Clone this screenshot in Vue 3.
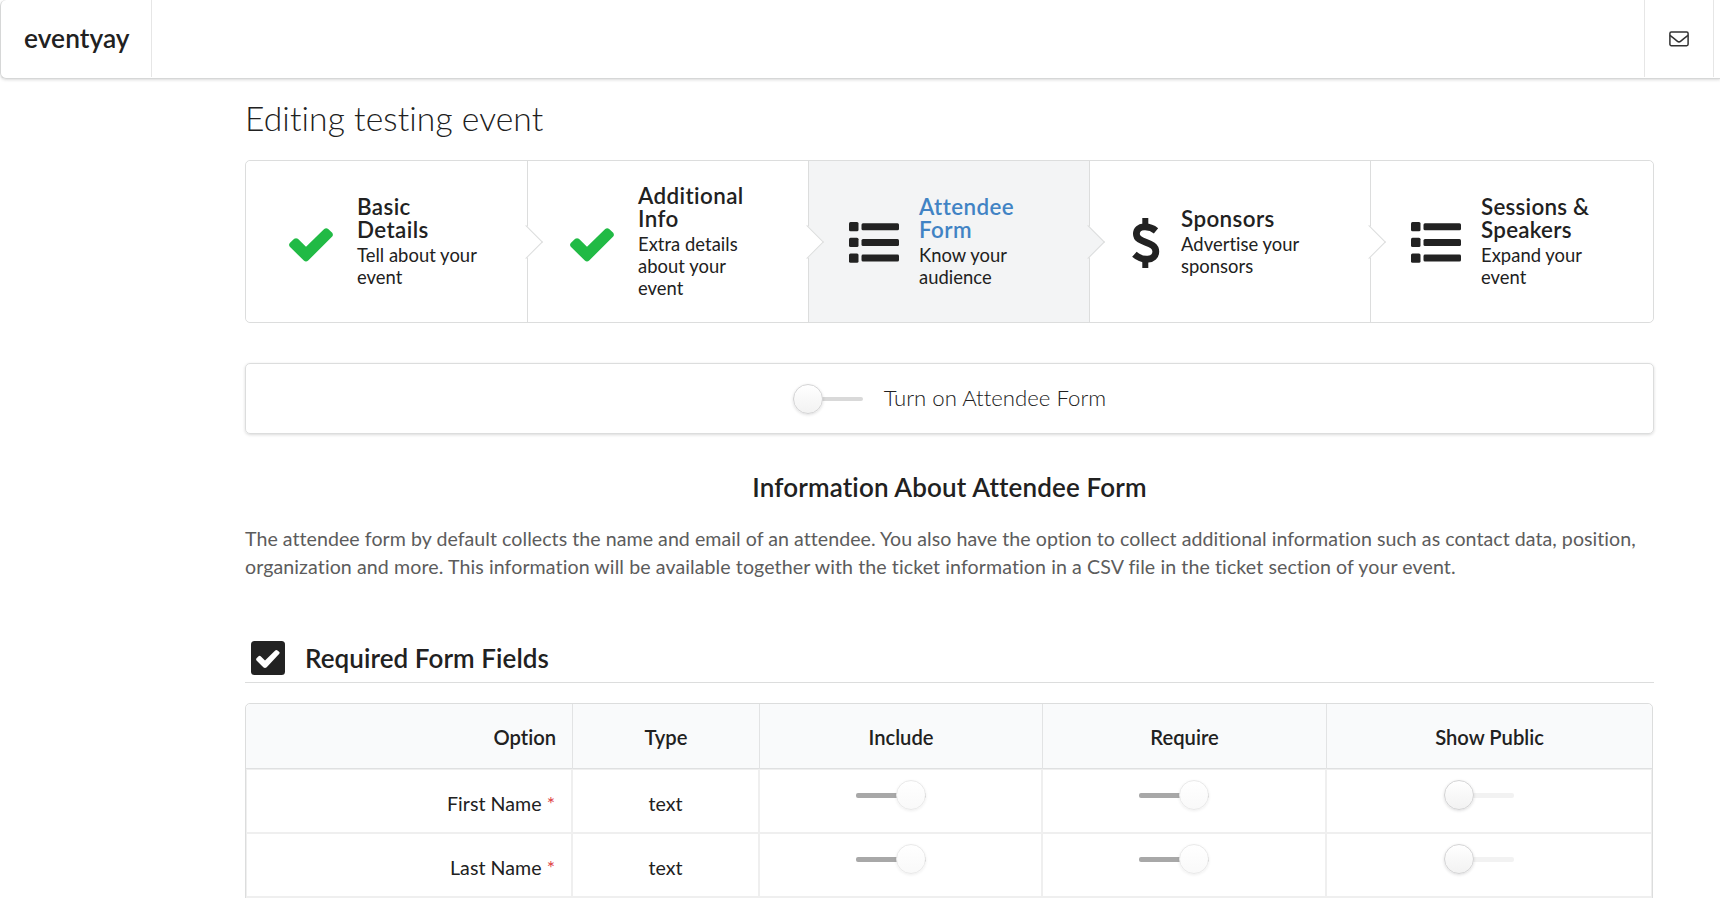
<script setup>
const steps = [
  { key: 'basic', icon: 'check', title: 'Basic\nDetails', text: 'Tell about your\nevent' },
  { key: 'additional', icon: 'check', title: 'Additional\nInfo', text: 'Extra details\nabout your\nevent' },
  { key: 'attendee', icon: 'list', title: 'Attendee\nForm', text: 'Know your\naudience', active: true },
  { key: 'sponsors', icon: 'dollar', title: 'Sponsors', text: 'Advertise your\nsponsors' },
  { key: 'sessions', icon: 'list', title: 'Sessions &\nSpeakers', text: 'Expand your\nevent' },
]
const columns = ['Option', 'Type', 'Include', 'Require', 'Show Public']
const rows = ['First Name', 'Last Name']
</script>

<template>
  <div class="page">
    <header class="topbar">
      <div class="brand">eventyay</div>
      <div class="mail">
        <svg width="20" height="16" viewBox="0 0 20 16" fill="none" stroke="#333" stroke-width="1.5">
          <rect x="0.9" y="1.1" width="18.2" height="13.6" rx="1.4" />
          <path d="M1 4.4C4 6.7 6.5 8.7 8.2 10.1Q10 11.6 11.8 10.1C13.5 8.7 16 6.7 19 4.4" />
        </svg>
      </div>
    </header>

    <main class="content">
      <h1 class="title">Editing testing event</h1>

      <nav class="steps">
        <div v-for="s in steps" :key="s.key" class="step" :class="[s.key, { active: s.active }]">
          <svg v-if="s.icon === 'check'" class="icon check" width="44" height="34" viewBox="0 0 44 34" fill="#21ba45">
            <path d="M43.2 8.6 19.2 32.5Q17 34.4 14.8 32.5L.8 18.8Q-.7 16.8.8 14.9L5.2 10.8Q7 9.5 8.9 10.8L17 18.8 35.2.9Q37.2-.5 39.2.9L43.2 4.7Q44.6 6.7 43.2 8.6Z" />
          </svg>
          <svg v-else-if="s.icon === 'list'" class="icon" width="50" height="41" viewBox="0 0 50 41" fill="#222">
            <rect x="0" y="0" width="9.5" height="9.3" rx="1.5" />
            <rect x="0" y="15.7" width="9.5" height="9.3" rx="1.5" />
            <rect x="0" y="31.4" width="9.5" height="9.3" rx="1.5" />
            <rect x="12.5" y="1.2" width="37.5" height="7" rx="1.5" />
            <rect x="12.5" y="16.9" width="37.5" height="7" rx="1.5" />
            <rect x="12.5" y="32.6" width="37.5" height="7" rx="1.5" />
          </svg>
          <svg v-else class="icon" width="28" height="50" viewBox="0 0 28 50" fill="none" stroke="#222" stroke-width="6.8">
            <path d="M13.3 0V8M13.3 42V50" stroke-width="6" />
            <path d="M24 12.8C17.5 7.5 4.4 6.8 4.4 16C4.4 26 23.8 22.5 23.8 33.5C23.8 43 10.5 43.5 2.4 36.3" />
          </svg>
          <div class="step-body">
            <div class="step-title">{{ s.title }}</div>
            <div class="step-text">{{ s.text }}</div>
          </div>
        </div>
      </nav>

      <section class="segment">
        <span class="toggle main"><i class="track"></i><i class="knob"></i></span>
        <span class="segment-label">Turn on Attendee Form</span>
      </section>

      <h3 class="info-title">Information About Attendee Form</h3>
      <p class="info">
        <span>The attendee form by default collects the name and email of an attendee. You also have the option to collect additional information such as contact data, position,</span><br />
        <span>organization and more. This information will be available together with the ticket information in a CSV file in the ticket section of your event.</span>
      </p>

      <h3 class="section-title">
        <svg width="34" height="34" viewBox="0 0 34 34">
          <rect width="34" height="34" rx="3.5" fill="#222" />
          <path d="M28.3 12.7 15.7 26.2Q14 27.6 12.3 26.2L5.5 19.5Q4.6 18.4 5.5 17.3L7.3 15.4Q8.5 14.4 9.7 15.3L14 19.4 24.2 9.4Q25.4 8.5 26.5 9.4L28.3 11.1Q29.1 11.9 28.3 12.7Z" fill="#fff" />
        </svg>
        <span>Required Form Fields</span>
      </h3>

      <div class="table">
        <div class="tr head">
          <div v-for="c in columns" :key="c" class="th">{{ c }}</div>
        </div>
        <div v-for="r in rows" :key="r" class="tr">
          <div class="td name">{{ r }} <span class="star">*</span></div>
          <div class="td">text</div>
          <div class="td switch"><span class="toggle on"><i class="track"></i><i class="knob"></i></span></div>
          <div class="td switch"><span class="toggle on"><i class="track"></i><i class="knob"></i></span></div>
          <div class="td switch"><span class="toggle off"><i class="track"></i><i class="knob"></i></span></div>
        </div>
        <div class="tr">
          <div v-for="c in columns" :key="c" class="td"></div>
        </div>
      </div>
    </main>
  </div>
</template>

<style>
body { overflow: hidden; background: #fff; }
</style>

<style scoped>
* { box-sizing: border-box; }
.page {
  width: 1720px;
  height: 898px;
  overflow: hidden;
  font-family: Lato, "Liberation Sans", sans-serif;
  font-size: 19.6px;
  line-height: 28px;
  font-variant-ligatures: none;
  color: #212121;
}
.topbar {
  display: flex;
  justify-content: space-between;
  height: 79px;
  border: 1px solid #d6d7d7;
  border-top: 0;
  border-right: 0;
  border-radius: 6px 0 0 6px;
  box-shadow: 0 1px 3px rgba(34, 36, 38, 0.17);
}
.brand {
  width: 151px;
  height: 77px;
  padding-left: 23px;
  border-right: 1px solid #e6e6e6;
  font-size: 26.3px;
  font-weight: 600;
  line-height: 77px;
  letter-spacing: 0.06px;
}
.mail {
  display: flex;
  align-items: center;
  justify-content: center;
  width: 70px;
  height: 77px;
  margin-right: 6px;
  border: solid #e6e6e6;
  border-width: 0 1px;
}
.content { width: 1409px; margin-left: 245px; }
.title {
  height: 81px;
  margin: 0;
  padding-top: 18px;
  font-size: 33.6px;
  font-weight: 300;
  line-height: 43px;
  letter-spacing: 0.1px;
}
.steps {
  display: grid;
  grid-template-columns: 282px 281px 281px 281px 1fr;
  height: 163px;
  border: 1px solid #dcdddd;
  border-radius: 5px;
}
.step {
  position: relative;
  display: flex;
  align-items: center;
  padding: 2px 0 0 40px;
  border-right: 1px solid #dcdddd;
  background: #fff;
}
.step:first-child { padding-left: 43px; border-radius: 5px 0 0 5px; }
.step:last-child { border-right: 0; border-radius: 0 5px 5px 0; }
.step.additional { padding-left: 42px; }
.step.sponsors { padding-left: 42px; }
.step.active { background: #f3f4f5; }
.step:not(:last-child)::after {
  content: '';
  position: absolute;
  z-index: 2;
  top: 81px;
  right: -11px;
  width: 23px;
  height: 23px;
  border: solid #dcdddd;
  border-width: 0 1px 1px 0;
  background: inherit;
  transform: translateY(-50%) rotate(-45deg);
}
.icon { flex: none; margin-right: 20px; }
.icon.check { margin: 5px 24px 0 0; }
.step.sponsors .icon { margin-right: 21px; }
.step-body { white-space: pre-line; line-height: 22.3px; }
.step-title { font-size: 22.4px; font-weight: 600; letter-spacing: 0.4px; }
.sessions .step-title { letter-spacing: 0.25px; }
.active .step-title { color: #4183c4; }
.step-text { margin-top: 3px; font-size: 18.4px; letter-spacing: 0.04px; }
.segment {
  display: flex;
  align-items: center;
  justify-content: center;
  height: 71px;
  margin-top: 40px;
  border: 1px solid #dcdddd;
  border-radius: 5px;
  box-shadow: 0 1px 3px rgba(34, 36, 38, 0.17);
}
.segment-label { margin-left: 21px; padding-bottom: 2px; font-size: 22.2px; font-weight: 300; }
.toggle { position: relative; display: inline-block; width: 70px; height: 30px; }
.track {
  position: absolute;
  top: 13px;
  left: 0;
  width: 70px;
  height: 5px;
  border-radius: 2px;
  background: #d9d9d9;
}
.main .track { height: 4px; }
.knob {
  position: absolute;
  top: 0;
  left: 0;
  width: 30px;
  height: 30px;
  border: 1px solid #d4d4d5;
  border-radius: 50%;
  background: linear-gradient(#fff, #f2f2f2);
  box-shadow: 0 1px 3px rgba(34, 36, 38, 0.15);
}
.on .track { background: #a8a8a8; }
.on .knob {
  left: 40px;
  border-color: #e9e9e9;
  background: linear-gradient(#fff, #f9f9f9);
  box-shadow: 0 1px 3px rgba(34, 36, 38, 0.08);
}
.off .track { background: #f2f2f2; }
.info-title {
  margin: 37px 0 0;
  font-size: 26px;
  font-weight: 600;
  line-height: 32px;
  letter-spacing: 0.14px;
  text-align: center;
}
.info { margin: 22px 0 0; color: #5c5c5c; white-space: nowrap; letter-spacing: 0.042px; }
.info span:last-child { letter-spacing: 0.09px; }
.section-title {
  display: flex;
  align-items: center;
  height: 50px;
  margin: 52px 0 20px;
  padding: 1px 0 0 6px;
  border-bottom: 1px solid #dcdddd;
  font-size: 26px;
  font-weight: 600;
  letter-spacing: 0.07px;
}
.section-title span { margin-left: 20px; }
.table {
  width: 1408px;
  border: 1px solid #dcdddd;
  border-radius: 5px;
}
.tr {
  display: grid;
  grid-template-columns: 326px 187px 283px 284px 326px;
  height: 64px;
  text-align: center;
}
.head { height: 65px; border-bottom: 1px solid #dfe0e1; border-radius: 5px 5px 0 0; background: #f9fafb; }
.th { border-left: 1px solid #e2e3e4; font-size: 20.2px; line-height: 66px; font-weight: 600; }
.th:first-child { padding-right: 16px; border-left: 0; text-align: right; }
.td { height: 64px; border: 1px solid #efefef; line-height: 67px; }
.td.name { padding-right: 16px; text-align: right; letter-spacing: 0.04px; }
.td.switch { display: flex; align-items: flex-start; justify-content: center; padding: 10px 20px 0 0; }
.star { color: #e04545; }
</style>
